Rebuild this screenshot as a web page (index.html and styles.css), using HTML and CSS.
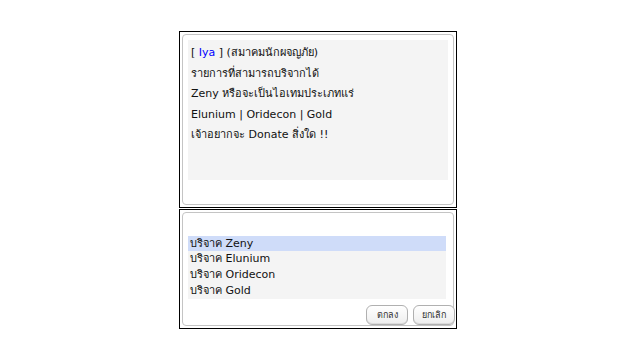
FILE: index.html
```html
<!DOCTYPE html>
<html lang="th">
<head>
    <meta charset="UTF-8">
    <title>NPC Donate</title>
    <link rel="stylesheet" href="styles.css">
</head>
<body>
    <div class="stack">
        <div class="window talk">
            <div class="frame">
                <div class="panel">
                    <p>[ <span class="npc">Iya</span> ] (สมาคมนักผจญภัย)</p>
                    <p>รายการที่สามารถบริจากได้</p>
                    <p>Zeny หรือจะเป็นไอเทมประเภทแร่</p>
                    <p>Elunium | Oridecon | Gold</p>
                    <p>เจ้าอยากจะ Donate สิ่งใด !!</p>
                </div>
            </div>
        </div>
        <div class="window menu">
            <div class="frame">
                <ul class="choices">
                    <li class="selected">บริจาค Zeny</li>
                    <li>บริจาค Elunium</li>
                    <li>บริจาค Oridecon</li>
                    <li>บริจาค Gold</li>
                </ul>
                <div class="actions">
                    <button>ตกลง</button>
                    <button>ยกเลิก</button>
                </div>
            </div>
        </div>
    </div>
</body>
</html>
```

FILE: styles.css
```css
body {
    margin: 0;
    background: #fff;
    font-family: "DejaVu Sans", "Noto Sans", sans-serif;
    font-size: 11px;
    color: #111;
}
.stack {
    display: flex;
    flex-direction: column;
    gap: 1px;
    margin: 31px 0 0 179px;
    width: 278px;
}
.window {
    box-sizing: border-box;
    border: 1px solid #000;
    padding: 2px;
}
.talk {
    height: 177px;
}
.menu {
    height: 120px;
}
.frame {
    box-sizing: border-box;
    height: 100%;
    border: 1px solid #c4c4c4;
    border-radius: 4px;
    padding: 5px;
}
.panel {
    background: #f4f4f4;
    height: 140px;
    padding: 3px 0 0 3px;
    box-sizing: border-box;
}
.panel p {
    margin: 0;
    line-height: 20.5px;
}
.npc {
    color: #0000ff;
}
.choices {
    list-style: none;
    margin: 18px 0 0 0;
    padding: 0;
    background: #f4f4f4;
    width: 258px;
}
.choices li {
    height: 16px;
    line-height: 16px;
    padding-left: 2px;
}
.choices li.selected {
    background: #cfdcf9;
    height: 15px;
}
.actions {
    display: flex;
    justify-content: flex-end;
    gap: 5px;
    margin-top: 6px;
    margin-right: -7px;
}
.actions button {
    width: 42px;
    height: 20px;
    padding: 0;
    border: 1px solid #b0b0b0;
    border-radius: 6px;
    background: linear-gradient(#ffffff, #eeeeee);
    box-shadow: inset 0 -1px 0 #dcdcdc;
    font-family: "DejaVu Sans", sans-serif;
    font-size: 9px;
    color: #333;
}
```
